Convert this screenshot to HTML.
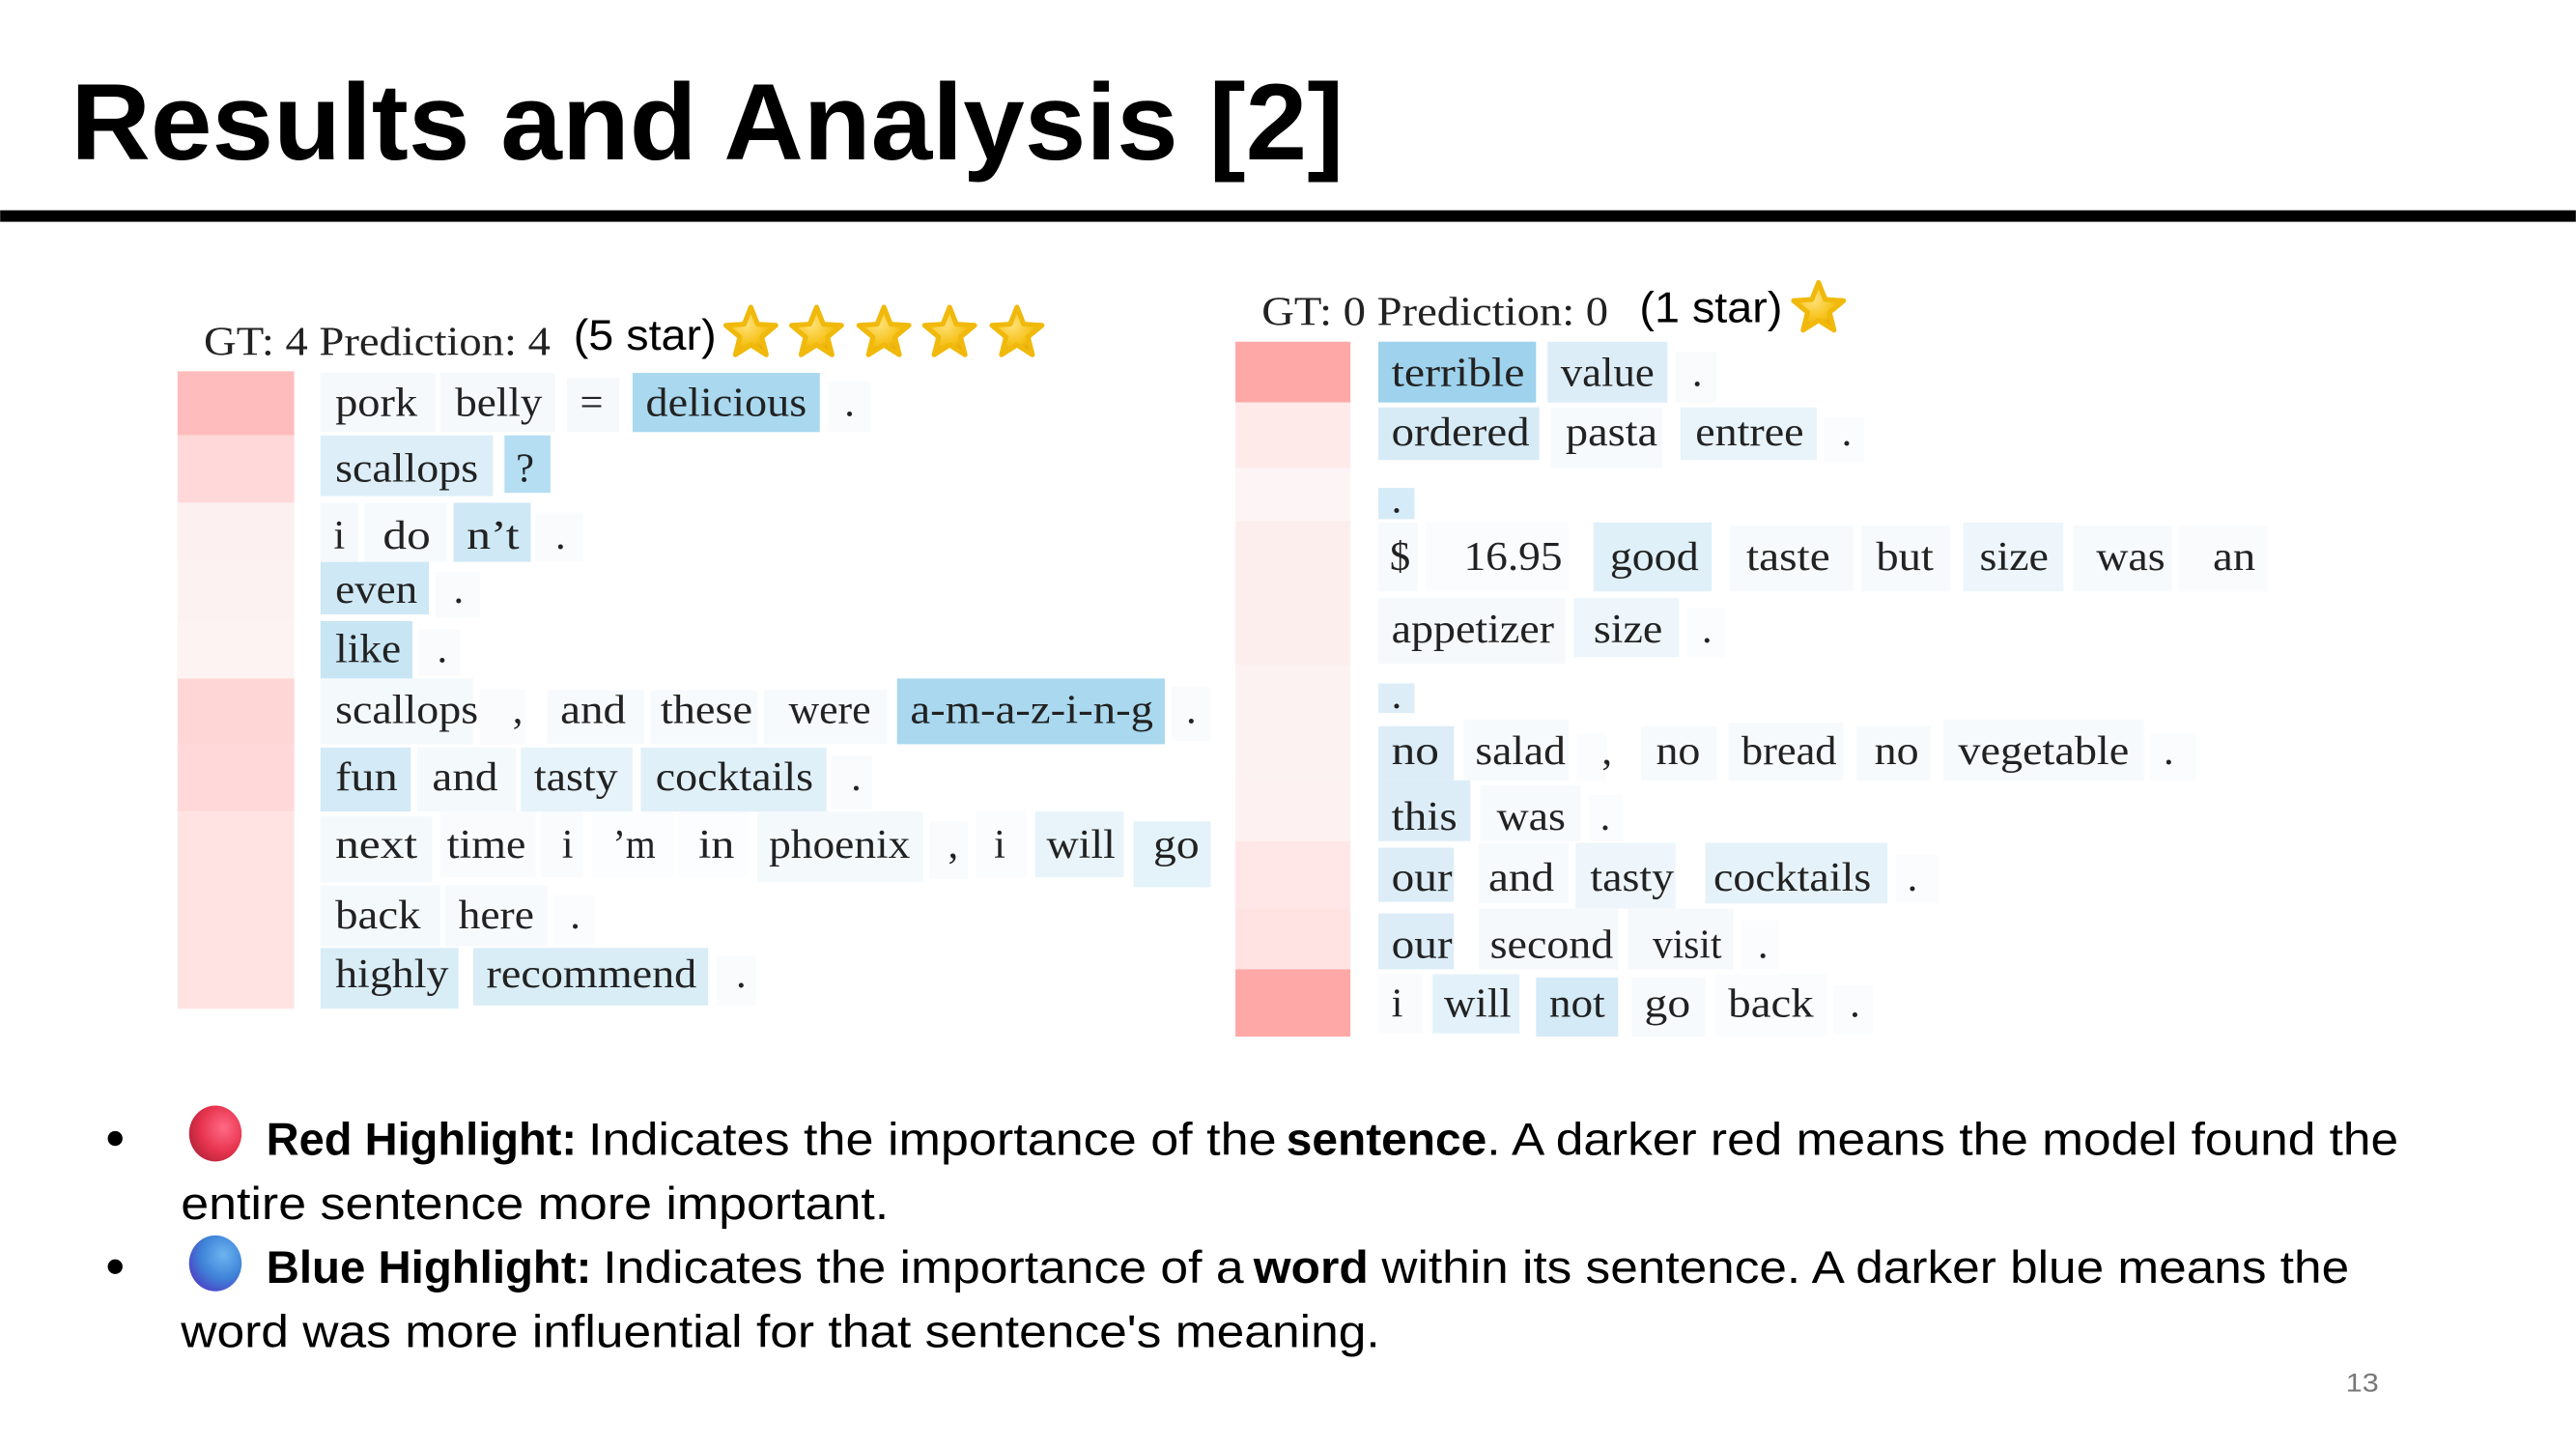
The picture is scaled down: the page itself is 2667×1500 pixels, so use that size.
<!DOCTYPE html>
<html><head><meta charset="utf-8"><style>
html,body{margin:0;padding:0;background:#fff;overflow:hidden}
svg{display:block}
.w{font-family:"Liberation Serif",serif;font-size:25px;fill:#222}
.s{font-family:"Liberation Sans",sans-serif;fill:#000}
</style></head><body>
<svg width="2667" height="1500" viewBox="0 0 1568 882" xmlns="http://www.w3.org/2000/svg">
<defs>
<radialGradient id="gs" cx="40%" cy="35%" r="70%"><stop offset="0" stop-color="#ffe27a"/><stop offset="0.6" stop-color="#f6c21a"/><stop offset="1" stop-color="#d99a00"/></radialGradient>
<radialGradient id="rs" cx="65%" cy="40%" r="70%"><stop offset="0" stop-color="#ff6a86"/><stop offset="0.6" stop-color="#e8344f"/><stop offset="1" stop-color="#b8253c"/></radialGradient>
<radialGradient id="bs" cx="65%" cy="35%" r="70%"><stop offset="0" stop-color="#6cb4f0"/><stop offset="0.6" stop-color="#3f83d8"/><stop offset="1" stop-color="#4a4ac8"/></radialGradient>
<g id="star"><polygon points="0,-16 4.11,-5.66 15.22,-4.94 6.66,2.16 9.4,12.94 0,7 -9.4,12.94 -6.66,2.16 -15.22,-4.94 -4.11,-5.66" fill="url(#gs)" stroke="#f0b90b" stroke-width="3" stroke-linejoin="round"/></g>
</defs>
<rect width="1568" height="882" fill="#fff"/>
<text class="s" x="43" y="97" font-size="66" font-weight="bold" textLength="775" lengthAdjust="spacingAndGlyphs">Results and Analysis [2]</text>
<rect x="0" y="128" width="1568" height="7" fill="#000"/>

<text class="w" x="124" y="216" font-size="25" textLength="211" lengthAdjust="spacingAndGlyphs">GT: 4 Prediction: 4</text>
<text class="s" x="349" y="213" font-size="26" textLength="87" lengthAdjust="spacingAndGlyphs">(5 star)</text>
<use href="#star" x="457" y="203"/><use href="#star" x="497" y="203"/><use href="#star" x="538" y="203"/><use href="#star" x="578" y="203"/><use href="#star" x="619" y="203"/>

<rect x="108" y="226" width="71" height="39" fill="#ffbcbc"/>
<rect x="108" y="265" width="71" height="41" fill="#ffd9d9"/>
<rect x="108" y="306" width="71" height="36" fill="#fdf0f0"/>
<rect x="108" y="342" width="71" height="36" fill="#fdf2f2"/>
<rect x="108" y="378" width="71" height="35" fill="#fdf3f3"/>
<rect x="108" y="413" width="71" height="40" fill="#ffd6d6"/>
<rect x="108" y="453" width="71" height="41" fill="#ffd9d9"/>
<rect x="108" y="494" width="71" height="120" fill="#ffe3e3"/>

<g>
<rect x="195" y="227" width="70" height="36" fill="#f5f9fc"/><text class="w" x="204" y="253" textLength="50" lengthAdjust="spacingAndGlyphs">pork</text>
<rect x="268" y="227" width="70" height="36" fill="#f5f9fc"/><text class="w" x="277" y="253" textLength="53" lengthAdjust="spacingAndGlyphs">belly</text>
<rect x="345" y="230" width="32" height="33" fill="#f5f9fc"/><text class="w" x="353" y="253">=</text>
<rect x="385" y="227" width="114" height="36" fill="#a9d8ef"/><text class="w" x="393" y="253" textLength="98" lengthAdjust="spacingAndGlyphs">delicious</text>
<rect x="504" y="232" width="26" height="31" fill="#f9fbfd"/><text class="w" x="514" y="253">.</text>

<rect x="195" y="265" width="105" height="37" fill="#ddeef8"/><text class="w" x="204" y="293" textLength="87" lengthAdjust="spacingAndGlyphs">scallops</text>
<rect x="307" y="265" width="28" height="35" fill="#b5def2"/><text class="w" x="314" y="293">?</text>

<rect x="195" y="306" width="23" height="36" fill="#f5f9fc"/><text class="w" x="203" y="334">i</text>
<rect x="222" y="306" width="50" height="36" fill="#f7fafd"/><text class="w" x="233" y="334" textLength="29" lengthAdjust="spacingAndGlyphs">do</text>
<rect x="276" y="306" width="47" height="36" fill="#cfe8f5"/><text class="w" x="284" y="334" textLength="32" lengthAdjust="spacingAndGlyphs">n’t</text>
<rect x="326" y="312" width="29" height="30" fill="#f9fbfd"/><text class="w" x="338" y="334">.</text>

<rect x="195" y="342" width="66" height="32" fill="#cfe8f5"/><text class="w" x="204" y="367" textLength="50" lengthAdjust="spacingAndGlyphs">even</text>
<rect x="265" y="348" width="27" height="28" fill="#f9fbfd"/><text class="w" x="276" y="367">.</text>

<rect x="195" y="378" width="56" height="35" fill="#c8e5f4"/><text class="w" x="204" y="403" textLength="40" lengthAdjust="spacingAndGlyphs">like</text>
<rect x="255" y="383" width="25" height="28" fill="#f9fbfd"/><text class="w" x="266" y="403">.</text>

<rect x="195" y="413" width="93" height="40" fill="#f4f9fc"/><text class="w" x="204" y="440" textLength="87" lengthAdjust="spacingAndGlyphs">scallops</text>
<rect x="292" y="420" width="28" height="33" fill="#f9fbfd"/><text class="w" x="312" y="440">,</text>
<rect x="333" y="420" width="59" height="33" fill="#f7fafd"/><text class="w" x="341" y="440" textLength="40" lengthAdjust="spacingAndGlyphs">and</text>
<rect x="396" y="420" width="65" height="33" fill="#f7fafd"/><text class="w" x="402" y="440" textLength="56" lengthAdjust="spacingAndGlyphs">these</text>
<rect x="465" y="420" width="75" height="33" fill="#f7fafd"/><text class="w" x="480" y="440" textLength="50" lengthAdjust="spacingAndGlyphs">were</text>
<rect x="546" y="413" width="163" height="40" fill="#a9d8ef"/><text class="w" x="554" y="440" textLength="148" lengthAdjust="spacingAndGlyphs">a-m-a-z-i-n-g</text>
<rect x="713" y="418" width="24" height="33" fill="#f9fbfd"/><text class="w" x="722" y="440">.</text>

<rect x="195" y="455" width="55" height="39" fill="#d4eaf6"/><text class="w" x="204" y="481" textLength="38" lengthAdjust="spacingAndGlyphs">fun</text>
<rect x="254" y="455" width="60" height="39" fill="#f4f9fc"/><text class="w" x="263" y="481" textLength="40" lengthAdjust="spacingAndGlyphs">and</text>
<rect x="317" y="455" width="68" height="39" fill="#e6f3fa"/><text class="w" x="325" y="481" textLength="51" lengthAdjust="spacingAndGlyphs">tasty</text>
<rect x="390" y="455" width="113" height="39" fill="#e0f0f9"/><text class="w" x="399" y="481" textLength="96" lengthAdjust="spacingAndGlyphs">cocktails</text>
<rect x="506" y="460" width="25" height="33" fill="#f9fbfd"/><text class="w" x="518" y="481">.</text>

<rect x="195" y="497" width="68" height="40" fill="#f4f9fc"/><text class="w" x="204" y="522" textLength="50" lengthAdjust="spacingAndGlyphs">next</text>
<rect x="268" y="494" width="58" height="40" fill="#f9fbfd"/><text class="w" x="272" y="522" textLength="48" lengthAdjust="spacingAndGlyphs">time</text>
<rect x="329" y="494" width="26" height="40" fill="#f9fbfd"/><text class="w" x="342" y="522">i</text>
<rect x="360" y="494" width="50" height="40" fill="#fcfdfe"/><text class="w" x="373" y="522" textLength="26" lengthAdjust="spacingAndGlyphs">’m</text>
<rect x="413" y="494" width="42" height="40" fill="#fcfdfe"/><text class="w" x="425" y="522" textLength="22" lengthAdjust="spacingAndGlyphs">in</text>
<rect x="461" y="494" width="101" height="43" fill="#f4f9fc"/><text class="w" x="468" y="522" textLength="86" lengthAdjust="spacingAndGlyphs">phoenix</text>
<rect x="566" y="500" width="23" height="35" fill="#f9fbfd"/><text class="w" x="577" y="522">,</text>
<rect x="594" y="494" width="31" height="40" fill="#fbfcfe"/><text class="w" x="605" y="522">i</text>
<rect x="630" y="494" width="54" height="40" fill="#e8f4fa"/><text class="w" x="637" y="522" textLength="42" lengthAdjust="spacingAndGlyphs">will</text>
<rect x="690" y="500" width="47" height="40" fill="#e4f2fa"/><text class="w" x="702" y="522" textLength="28" lengthAdjust="spacingAndGlyphs">go</text>

<rect x="195" y="539" width="73" height="37" fill="#f4f9fc"/><text class="w" x="204" y="565" textLength="52" lengthAdjust="spacingAndGlyphs">back</text>
<rect x="271" y="539" width="62" height="37" fill="#f7fafd"/><text class="w" x="279" y="565" textLength="46" lengthAdjust="spacingAndGlyphs">here</text>
<rect x="337" y="545" width="25" height="30" fill="#fbfcfe"/><text class="w" x="347" y="565">.</text>

<rect x="195" y="577" width="84" height="37" fill="#d9edf7"/><text class="w" x="204" y="601" textLength="69" lengthAdjust="spacingAndGlyphs">highly</text>
<rect x="288" y="577" width="143" height="35" fill="#d9edf7"/><text class="w" x="296" y="601" textLength="128" lengthAdjust="spacingAndGlyphs">recommend</text>
<rect x="436" y="582" width="24" height="30" fill="#f9fbfd"/><text class="w" x="448" y="601">.</text>
</g>

<text class="w" x="768" y="198" font-size="25" textLength="211" lengthAdjust="spacingAndGlyphs">GT: 0 Prediction: 0</text>
<text class="s" x="998" y="196" font-size="26" textLength="87" lengthAdjust="spacingAndGlyphs">(1 star)</text>
<use href="#star" x="1107" y="188"/>

<rect x="752" y="208" width="70" height="37" fill="#ffa8a8"/>
<rect x="752" y="245" width="70" height="40" fill="#ffeaea"/>
<rect x="752" y="285" width="70" height="32" fill="#fdf5f5"/>
<rect x="752" y="317" width="70" height="88" fill="#fdeeee"/>
<rect x="752" y="405" width="70" height="70" fill="#fdf2f2"/>
<rect x="752" y="475" width="70" height="37" fill="#fdf1f1"/>
<rect x="752" y="512" width="70" height="41" fill="#ffe7e7"/>
<rect x="752" y="553" width="70" height="37" fill="#ffe3e3"/>
<rect x="752" y="590" width="70" height="41" fill="#ffa8a8"/>

<g>
<rect x="839" y="208" width="96" height="37" fill="#9fd2ec"/><text class="w" x="847" y="235" textLength="81" lengthAdjust="spacingAndGlyphs">terrible</text>
<rect x="942" y="208" width="73" height="37" fill="#dcedf8"/><text class="w" x="950" y="235" textLength="57" lengthAdjust="spacingAndGlyphs">value</text>
<rect x="1020" y="214" width="25" height="31" fill="#f9fbfd"/><text class="w" x="1030" y="235">.</text>

<rect x="839" y="248" width="98" height="32" fill="#d7ebf7"/><text class="w" x="847" y="271" textLength="84" lengthAdjust="spacingAndGlyphs">ordered</text>
<rect x="944" y="248" width="68" height="37" fill="#f7fafd"/><text class="w" x="953" y="271" textLength="56" lengthAdjust="spacingAndGlyphs">pasta</text>
<rect x="1023" y="248" width="83" height="32" fill="#e8f3fa"/><text class="w" x="1032" y="271" textLength="66" lengthAdjust="spacingAndGlyphs">entree</text>
<rect x="1110" y="254" width="25" height="28" fill="#fbfcfe"/><text class="w" x="1121" y="271">.</text>

<rect x="839" y="297" width="22" height="19" fill="#d5ebf7"/><text class="w" x="847" y="312">.</text>

<rect x="839" y="318" width="24" height="42" fill="#f7fafd"/><text class="w" x="846" y="347">$</text>
<rect x="868" y="318" width="87" height="42" fill="#fafcfe"/><text class="w" x="891" y="347" textLength="60" lengthAdjust="spacingAndGlyphs">16.95</text>
<rect x="970" y="318" width="72" height="42" fill="#e0f0f9"/><text class="w" x="980" y="347" textLength="54" lengthAdjust="spacingAndGlyphs">good</text>
<rect x="1053" y="320" width="75" height="40" fill="#f7fafd"/><text class="w" x="1063" y="347" textLength="51" lengthAdjust="spacingAndGlyphs">taste</text>
<rect x="1133" y="320" width="54" height="40" fill="#f7fafd"/><text class="w" x="1142" y="347" textLength="35" lengthAdjust="spacingAndGlyphs">but</text>
<rect x="1195" y="318" width="61" height="42" fill="#eef6fb"/><text class="w" x="1205" y="347" textLength="42" lengthAdjust="spacingAndGlyphs">size</text>
<rect x="1262" y="320" width="60" height="40" fill="#f7fafd"/><text class="w" x="1276" y="347" textLength="42" lengthAdjust="spacingAndGlyphs">was</text>
<rect x="1326" y="320" width="54" height="40" fill="#f9fbfd"/><text class="w" x="1347" y="347" textLength="26" lengthAdjust="spacingAndGlyphs">an</text>

<rect x="839" y="364" width="114" height="40" fill="#f5f9fc"/><text class="w" x="847" y="391" textLength="99" lengthAdjust="spacingAndGlyphs">appetizer</text>
<rect x="958" y="364" width="64" height="36" fill="#eef6fb"/><text class="w" x="970" y="391" textLength="42" lengthAdjust="spacingAndGlyphs">size</text>
<rect x="1027" y="370" width="23" height="30" fill="#fbfcfe"/><text class="w" x="1036" y="391">.</text>

<rect x="839" y="416" width="22" height="18" fill="#dcedf8"/><text class="w" x="847" y="431">.</text>

<rect x="839" y="442" width="46" height="33" fill="#dcedf8"/><text class="w" x="847" y="465" textLength="29" lengthAdjust="spacingAndGlyphs">no</text>
<rect x="891" y="438" width="64" height="37" fill="#f7fafd"/><text class="w" x="898" y="465" textLength="55" lengthAdjust="spacingAndGlyphs">salad</text>
<rect x="960" y="446" width="18" height="29" fill="#fbfcfe"/><text class="w" x="975" y="465">,</text>
<rect x="999" y="442" width="46" height="33" fill="#f7fafd"/><text class="w" x="1008" y="465" textLength="27" lengthAdjust="spacingAndGlyphs">no</text>
<rect x="1052" y="440" width="70" height="35" fill="#f7fafd"/><text class="w" x="1060" y="465" textLength="58" lengthAdjust="spacingAndGlyphs">bread</text>
<rect x="1130" y="442" width="45" height="33" fill="#f7fafd"/><text class="w" x="1141" y="465" textLength="27" lengthAdjust="spacingAndGlyphs">no</text>
<rect x="1183" y="438" width="122" height="37" fill="#f7fafd"/><text class="w" x="1192" y="465" textLength="104" lengthAdjust="spacingAndGlyphs">vegetable</text>
<rect x="1309" y="446" width="28" height="29" fill="#fbfcfe"/><text class="w" x="1317" y="465">.</text>

<rect x="839" y="475" width="56" height="37" fill="#dcedf8"/><text class="w" x="847" y="505" textLength="40" lengthAdjust="spacingAndGlyphs">this</text>
<rect x="901" y="478" width="61" height="34" fill="#f7fafd"/><text class="w" x="911" y="505" textLength="42" lengthAdjust="spacingAndGlyphs">was</text>
<rect x="967" y="484" width="21" height="28" fill="#fbfcfe"/><text class="w" x="974" y="505">.</text>

<rect x="839" y="516" width="46" height="33" fill="#dcedf8"/><text class="w" x="847" y="542" textLength="37" lengthAdjust="spacingAndGlyphs">our</text>
<rect x="900" y="513" width="55" height="37" fill="#f7fafd"/><text class="w" x="906" y="542" textLength="40" lengthAdjust="spacingAndGlyphs">and</text>
<rect x="959" y="513" width="61" height="40" fill="#eef6fb"/><text class="w" x="968" y="542" textLength="51" lengthAdjust="spacingAndGlyphs">tasty</text>
<rect x="1038" y="513" width="111" height="37" fill="#e6f2fa"/><text class="w" x="1043" y="542" textLength="96" lengthAdjust="spacingAndGlyphs">cocktails</text>
<rect x="1154" y="520" width="26" height="30" fill="#fbfcfe"/><text class="w" x="1161" y="542">.</text>

<rect x="839" y="556" width="46" height="34" fill="#dcedf8"/><text class="w" x="847" y="583" textLength="37" lengthAdjust="spacingAndGlyphs">our</text>
<rect x="900" y="553" width="85" height="37" fill="#f5f9fc"/><text class="w" x="907" y="583" textLength="75" lengthAdjust="spacingAndGlyphs">second</text>
<rect x="991" y="553" width="64" height="37" fill="#f5f9fc"/><text class="w" x="1006" y="583" textLength="42" lengthAdjust="spacingAndGlyphs">visit</text>
<rect x="1060" y="560" width="23" height="30" fill="#fbfcfe"/><text class="w" x="1070" y="583">.</text>

<rect x="839" y="593" width="27" height="36" fill="#f9fbfd"/><text class="w" x="847" y="619">i</text>
<rect x="872" y="593" width="53" height="36" fill="#e3f1fa"/><text class="w" x="879" y="619" textLength="41" lengthAdjust="spacingAndGlyphs">will</text>
<rect x="935" y="595" width="50" height="36" fill="#d4eaf6"/><text class="w" x="943" y="619" textLength="34" lengthAdjust="spacingAndGlyphs">not</text>
<rect x="993" y="595" width="45" height="36" fill="#f7fafd"/><text class="w" x="1001" y="619" textLength="28" lengthAdjust="spacingAndGlyphs">go</text>
<rect x="1044" y="593" width="68" height="38" fill="#fafcfe"/><text class="w" x="1052" y="619" textLength="52" lengthAdjust="spacingAndGlyphs">back</text>
<rect x="1116" y="600" width="24" height="30" fill="#fbfcfe"/><text class="w" x="1126" y="619">.</text>
</g>

<circle cx="70" cy="693" r="4.5" fill="#000"/>
<ellipse cx="131" cy="690" rx="16" ry="17" fill="url(#rs)"/>
<text class="s" x="162" y="703" font-size="28" font-weight="bold" textLength="189" lengthAdjust="spacingAndGlyphs">Red Highlight:</text>
<text class="s" x="358" y="703" font-size="28" textLength="419" lengthAdjust="spacingAndGlyphs">Indicates the importance of the</text>
<text class="s" x="783" y="703" font-size="28" font-weight="bold" textLength="122" lengthAdjust="spacingAndGlyphs">sentence</text>
<text class="s" x="905" y="703" font-size="28" textLength="555" lengthAdjust="spacingAndGlyphs">. A darker red means the model found the</text>
<text class="s" x="110" y="742" font-size="28" textLength="431" lengthAdjust="spacingAndGlyphs">entire sentence more important.</text>

<circle cx="70" cy="771" r="4.5" fill="#000"/>
<ellipse cx="131" cy="769" rx="16" ry="17" fill="url(#bs)"/>
<text class="s" x="162" y="781" font-size="28" font-weight="bold" textLength="198" lengthAdjust="spacingAndGlyphs">Blue Highlight:</text>
<text class="s" x="367" y="781" font-size="28" textLength="390" lengthAdjust="spacingAndGlyphs">Indicates the importance of a</text>
<text class="s" x="763" y="781" font-size="28" font-weight="bold" textLength="70" lengthAdjust="spacingAndGlyphs">word</text>
<text class="s" x="841" y="781" font-size="28" textLength="589" lengthAdjust="spacingAndGlyphs">within its sentence. A darker blue means the</text>
<text class="s" x="110" y="820" font-size="28" textLength="730" lengthAdjust="spacingAndGlyphs">word was more influential for that sentence's meaning.</text>

<text class="s" x="1428" y="847" font-size="16" style="fill:#777" textLength="20" lengthAdjust="spacingAndGlyphs">13</text>
</svg>
</body></html>
